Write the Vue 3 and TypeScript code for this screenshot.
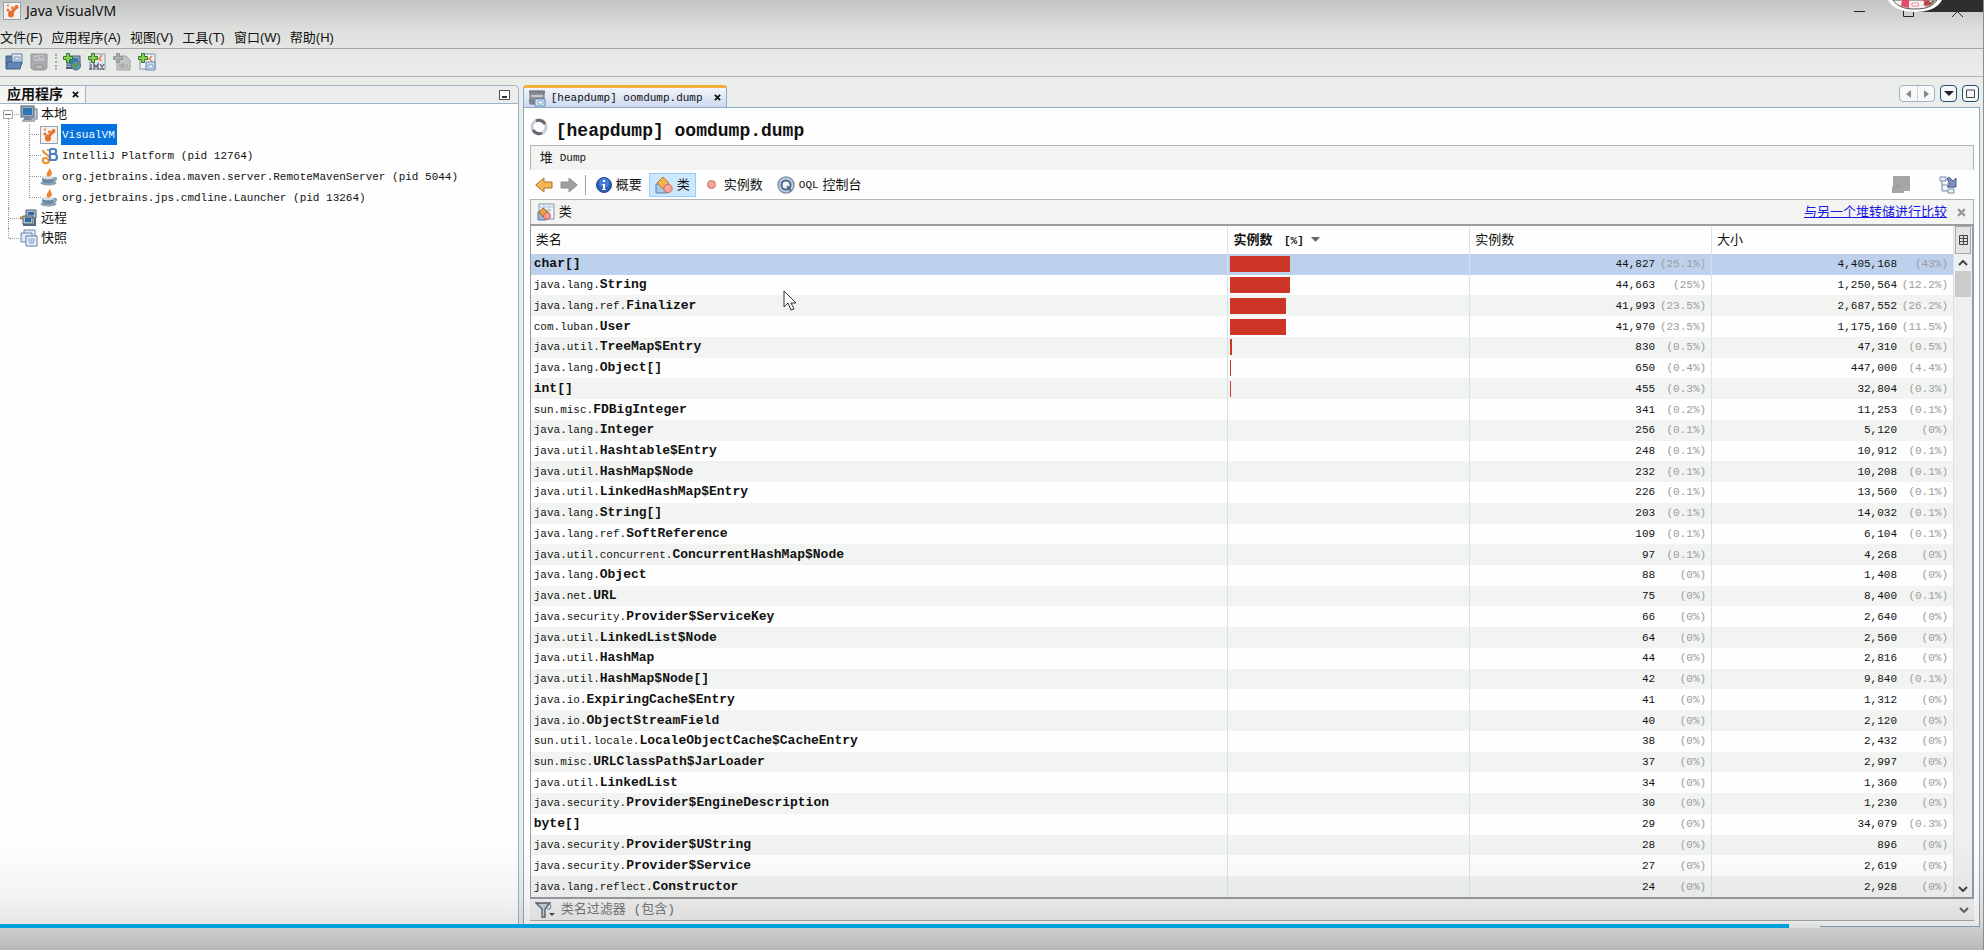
<script setup lang="ts">
import { ref } from 'vue'

interface ClassRow {
  pkg: string
  name: string
  count: string
  countPct: string
  size: string
  sizePct: string
}

const parse = (line: string): ClassRow => {
  const [pkg, name, count, countPct, size, sizePct] = line.split('|')
  return { pkg, name, count, countPct, size, sizePct }
}

const rows: ClassRow[] = [
  '|char[]|44,827|25.1|4,405,168|43',
  'java.lang.|String|44,663|25|1,250,564|12.2',
  'java.lang.ref.|Finalizer|41,993|23.5|2,687,552|26.2',
  'com.luban.|User|41,970|23.5|1,175,160|11.5',
  'java.util.|TreeMap$Entry|830|0.5|47,310|0.5',
  'java.lang.|Object[]|650|0.4|447,000|4.4',
  '|int[]|455|0.3|32,804|0.3',
  'sun.misc.|FDBigInteger|341|0.2|11,253|0.1',
  'java.lang.|Integer|256|0.1|5,120|0',
  'java.util.|Hashtable$Entry|248|0.1|10,912|0.1',
  'java.util.|HashMap$Node|232|0.1|10,208|0.1',
  'java.util.|LinkedHashMap$Entry|226|0.1|13,560|0.1',
  'java.lang.|String[]|203|0.1|14,032|0.1',
  'java.lang.ref.|SoftReference|109|0.1|6,104|0.1',
  'java.util.concurrent.|ConcurrentHashMap$Node|97|0.1|4,268|0',
  'java.lang.|Object|88|0|1,408|0',
  'java.net.|URL|75|0|8,400|0.1',
  'java.security.|Provider$ServiceKey|66|0|2,640|0',
  'java.util.|LinkedList$Node|64|0|2,560|0',
  'java.util.|HashMap|44|0|2,816|0',
  'java.util.|HashMap$Node[]|42|0|9,840|0.1',
  'java.io.|ExpiringCache$Entry|41|0|1,312|0',
  'java.io.|ObjectStreamField|40|0|2,120|0',
  'sun.util.locale.|LocaleObjectCache$CacheEntry|38|0|2,432|0',
  'sun.misc.|URLClassPath$JarLoader|37|0|2,997|0',
  'java.util.|LinkedList|34|0|1,360|0',
  'java.security.|Provider$EngineDescription|30|0|1,230|0',
  '|byte[]|29|0|34,079|0.3',
  'java.security.|Provider$UString|28|0|896|0',
  'java.security.|Provider$Service|27|0|2,619|0',
  'java.lang.reflect.|Constructor|24|0|2,928|0',
].map(parse)

const menus = ['文件(F)', '应用程序(A)', '视图(V)', '工具(T)', '窗口(W)', '帮助(H)']

const apps = [
  { icon: 'vvm', label: 'VisualVM' },
  { icon: 'jb', label: 'IntelliJ Platform (pid 12764)' },
  { icon: 'java', label: 'org.jetbrains.idea.maven.server.RemoteMavenServer (pid 5044)' },
  { icon: 'java', label: 'org.jetbrains.jps.cmdline.Launcher (pid 13264)' },
]

const selectedRow = ref(0)
const selectedApp = ref(0)
const filter = ref('')

const barWidth = (pct: string): string => {
  const value = parseFloat(pct)
  return value < 0.3 ? '0' : `max(1px, ${value}%)`
}
</script>

<template>
  <div class="app">
    <svg class="defs" aria-hidden="true">
      <symbol id="vvm" viewBox="0 0 18 18">
        <rect x=".5" y=".5" width="17" height="17" fill="#f4f1ee" stroke="#8fa3b8" />
        <ellipse cx="8" cy="12" rx="3" ry="3.600" fill="#e5702b" /><path d="M9 10 13 6" stroke="#e5702b" stroke-width="2.500" />
        <circle cx="13.500" cy="5" r="2" fill="#e5702b" /><circle cx="5" cy="3.500" r="1.300" fill="#ee9a55" /><circle cx="9.500" cy="6" r="1.400" fill="#e5702b" /><circle cx="5" cy="8" r="1.500" fill="#e5702b" />
      </symbol>
      <symbol id="jb" viewBox="0 0 18 18">
        <path d="M7 3h3v7c0 4-2 7-5 6-3-1-3-5 0-5s5 3 3 5M3 3c0 5 7 4 7 9" fill="none" stroke="#ef8f22" stroke-width="2" />
        <path d="M10 2v12M10 2h4c3 0 3 5-1 5h-2 3c4 0 4 6 0 6h-4" fill="none" stroke="#4d7fc6" stroke-width="2.200" />
      </symbol>
      <symbol id="java" viewBox="0 0 18 18">
        <ellipse cx="8.500" cy="15" rx="8" ry="2.500" fill="#8ba0b4" />
        <path d="M2 9h12v2c0 3-2 4-6 4S2 14 2 11z" fill="#6f879f" /><path d="M14 10c3-1 3 2 0 3" fill="none" stroke="#6f879f" stroke-width="1.500" />
        <ellipse cx="8" cy="9.500" rx="6" ry="1.800" fill="#d8e0e8" />
        <path d="M9 0c1 3-5 5-1 9 4-2 5-3 3-6 0 0 0-2-2-3z" fill="#ec8433" />
      </symbol>
      <symbol id="host" viewBox="0 0 18 18">
        <rect x="7" y="4" width="10" height="10" fill="#ccd3da" stroke="#68798a" />
        <rect x="1" y="1" width="13" height="11" fill="#9aabbb" stroke="#4e6274" /><rect x="3" y="3" width="9" height="7" fill="#2f74b5" />
        <path d="M5 12h5l2 3H3z" fill="#74889a" /><path d="M2 16h13" stroke="#4e6274" />
      </symbol>
      <symbol id="remote" viewBox="0 0 18 18">
        <path d="M6 1h10v8H6zM3 7h10v8H3z" fill="#b0bcc8" stroke="#4e6274" /><path d="M8 3h6v3H8zM5 9h6v4H5z" fill="#2d67a5" />
        <path d="M3 16h13M15 9v7" stroke="#56697b" stroke-width="2" /><path d="M0 9h3" stroke="#b98639" stroke-width="3" />
      </symbol>
      <symbol id="snaps" viewBox="0 0 18 18">
        <path d="M4 1h11v9H4z" fill="#dfe8f4" stroke="#6c87ad" /><path d="M1 4h11v9H1z" fill="#dfe8f4" stroke="#6c87ad" /><path d="M6 7h11v10H6z" fill="#edf3fa" stroke="#5c7aa6" />
        <path d="M8 10h7M8 12h7" stroke="#7c99c2" /><path d="M9 13h5v2H9z" fill="#a7bedc" />
      </symbol>
      <symbol id="open" viewBox="0 0 18 18">
        <path d="M1 3h6v12H1z" fill="#5a7ea5" stroke="#3f5f83" /><path d="M7 1h10v10H7z" fill="#e6eef7" stroke="#5f7d9d" /><path d="M9 4h6v3H9z" fill="none" stroke="#7391b4" />
        <path d="M3 9h14l-2 7H1z" fill="#5f88b5" stroke="#3f5f83" />
      </symbol>
      <symbol id="save" viewBox="0 0 18 18">
        <path d="M1 1h16v14l-2 2H3l-2-2z" fill="#a9abae" stroke="#97999c" /><path d="M4 2h10v6H4z" fill="#bfc1c3" /><path d="M10 4h3M5 5h3M5 12h8v4H5z" stroke="#8f9194" fill="#b9bbbd" />
      </symbol>
      <symbol id="plus" viewBox="0 0 10 10">
        <path d="M3.500.5h3v3h3v3h-3v3h-3v-3h-3v-3h3z" fill="#8bd053" stroke="#2f7d24" />
      </symbol>
      <symbol id="addhost" viewBox="0 0 18 18">
        <rect x="4" y="3" width="13" height="10" fill="#8fa4b8" stroke="#4e6274" /><rect x="6" y="5" width="9" height="6" fill="#3878b4" /><path d="M3 15h9" stroke="#4e6274" stroke-width="2" />
        <circle cx="13" cy="12.500" r="4.500" fill="#5c93c9" stroke="#42698f" /><path d="M10 11c2-2 4 0 6-1l-2 5-2 1z" fill="#55a048" />
        <use href="#plus" x="0" y="0" width="10" height="10" />
      </symbol>
      <symbol id="addjmx" viewBox="0 0 18 18">
        <path d="M5 1h12v15H2V8z" fill="#e4e9ee" stroke="#8c9cad" /><path d="m14 2-3 4 3 2" stroke="#ec8433" fill="none" stroke-width="1.500" />
        <path d="M3 11v5H1m5 1v-6l2 3 2-3v6m2-6 4 6m0-6-4 6" stroke="#5a6470" fill="none" stroke-width="1.300" /><use href="#plus" width="10" height="10" />
      </symbol>
      <symbol id="adddump" viewBox="0 0 18 18">
        <path d="M4 3h9l4 4v10H4z" fill="#c3c5c6" stroke="#a0a2a3" /><path d="M3.500.5h3v3h3v3h-3v3h-3v-3h-3v-3h3z" fill="#a9b0a9" stroke="#929892" />
        <path d="M7 11v4M9 11h2v4H9zM14 11v4" stroke="#999b9c" fill="none" />
      </symbol>
      <symbol id="addsnap" viewBox="0 0 18 18">
        <path d="M4 1h13v15H2V8z" fill="#f0f3f7" stroke="#7890ae" /><path d="m14 3-3 3 3 2" stroke="#ec8433" fill="none" stroke-width="1.500" />
        <path d="M8 9h9v8H8z" fill="#cfdff1" stroke="#5f82b0" /><path d="M10 12h5v3h-5z" fill="#fff" stroke="#7d9ac0" /><use href="#plus" width="10" height="10" />
      </symbol>
      <symbol id="heap" viewBox="0 0 18 18">
        <path d="M2 2h14v13H2z" fill="#8c9096" stroke="#6c7076" /><path d="M1 3h16M1 12h6" stroke="#777b80" stroke-width="3" stroke-dasharray="2 1" /><path d="M3 7h12" stroke="#c5c8cc" stroke-width="2" />
        <path d="M7 10h10v7H7z" fill="#d6e6f6" stroke="#5f88b5" /><path d="M10 12h5v3h-5z" fill="#fff" stroke="#7faad5" />
      </symbol>
      <symbol id="shapes" viewBox="0 0 18 18">
        <path d="M1 8h11v9H1z" fill="#a9c8e6" stroke="#5580aa" /><path d="m8 1 6 6-6 6-6-6z" fill="#f2b450" stroke="#b0792b" /><circle cx="13" cy="12.500" r="4.200" fill="#f4a59b" stroke="#c8645a" />
      </symbol>
      <symbol id="shapetable" viewBox="0 0 18 18">
        <path d="M2 1h15v15H2z" fill="#f5f8fb" stroke="#8194aa" /><path d="M3 4h14M5 7h10M7 1v6M12 1v13" stroke="#a9bfd6" />
        <path d="M1 9h8v8H1z" fill="#94b7da" stroke="#5580aa" /><path d="m6 5 5 4-5 5-4-5z" fill="#e9a542" stroke="#946729" /><circle cx="10" cy="13" r="3.500" fill="#f4a08f" stroke="#c8645a" />
      </symbol>
      <symbol id="info" viewBox="0 0 16 16">
        <circle cx="8" cy="8" r="7.500" fill="#2b5fb8" stroke="#1d468f" /><circle cx="8" cy="6" r="5" fill="#4a7ed0" /><path d="M7 3h2v2H7zM6 7h3v5h1v1H6v-1h1V8H6z" fill="#fff" />
      </symbol>
      <symbol id="oql" viewBox="0 0 18 18">
        <circle cx="9" cy="9" r="8" fill="#c3cfdd" stroke="#7f93ab" stroke-width="1.500" /><circle cx="9" cy="9" r="4.500" fill="#f1f5f9" stroke="#4c6788" stroke-width="2" /><path d="m10 10 4 5" stroke="#4c6788" stroke-width="2" />
      </symbol>
      <symbol id="left" viewBox="0 0 18 16">
        <path d="M.7 8 9 1v4h8v6H9v4z" fill="#f5b655" stroke="#a9722a" />
      </symbol>
      <symbol id="right" viewBox="0 0 18 16">
        <path d="M17.300 8 9 1v4H1v6h8v4z" fill="#9d9fa1" stroke="#8d8f91" />
      </symbol>
      <symbol id="funnel" viewBox="0 0 20 16">
        <path d="M1 1h14l-5 6v8H7V7z" fill="#c5d3de" stroke="#55626e" stroke-width="1.300" /><path d="M12 3c3-2 5 0 3 4h-3" fill="none" stroke="#6c7984" /><path d="M14 11h6l-3 3z" fill="#454d55" />
      </symbol>
      <symbol id="jump" viewBox="0 0 18 18">
        <path d="M1 1h6v4H1zM9 7h6v4H9zM9 13h6v4H9zM3 5v10h6M3 9h6" fill="#eef2f8" stroke="#758aa5" /><path d="m8 3 2-2 4 4 3-3v9H8l3-3z" fill="#7f8ec0" stroke="#4d5b91" />
      </symbol>
      <symbol id="chev" viewBox="0 0 10 6"><path d="m1 1 4 4 4-4" fill="none" stroke="currentColor" stroke-width="2" /></symbol>
      <symbol id="cross" viewBox="0 0 8 8"><path d="m1 1 6 6m0-6-6 6" stroke="currentColor" stroke-width="2" /></symbol>
    </svg>

    <header class="chrome">
      <div class="titlebar">
        <svg class="i18"><use href="#vvm" /></svg>
        <span class="apptitle">Java VisualVM</span>
        <div class="winbtns">
          <button aria-label="最小化"><svg width="11" height="11"><path d="M0 5.500h11" stroke="#222" /></svg></button>
          <button aria-label="最大化"><svg width="11" height="11"><path d="M.5.5h10v10H.5z" stroke="#222" fill="none" /></svg></button>
          <button aria-label="关闭"><svg width="11" height="11"><path d="m0 0 11 11M11 0 0 11" stroke="#222" /></svg></button>
        </div>
      </div>
      <nav class="menubar">
        <button v-for="m in menus" :key="m">{{ m }}</button>
      </nav>
      <div class="toolbar">
        <button aria-label="打开"><svg class="i18"><use href="#open" /></svg></button>
        <button aria-label="保存" disabled><svg class="i18"><use href="#save" /></svg></button>
        <span class="grip"></span>
        <button aria-label="添加远程主机"><svg class="i18"><use href="#addhost" /></svg></button>
        <button aria-label="添加 JMX 连接"><svg class="i18"><use href="#addjmx" /></svg></button>
        <button aria-label="添加核心 Dump" disabled><svg class="i18"><use href="#adddump" /></svg></button>
        <button aria-label="添加快照"><svg class="i18"><use href="#addsnap" /></svg></button>
      </div>
    </header>

    <main class="work">
      <aside class="side">
        <div class="sidetabs">
          <div class="sidetab"><span>应用程序</span><button aria-label="关闭"><svg class="x"><use href="#cross" /></svg></button></div>
          <button class="mini" aria-label="最小化窗口"><svg width="11" height="10"><path d="M.5.5h10v9H.5z" fill="#fff" stroke="#444b55" /><path d="M3 7h5" stroke="#333" stroke-width="2" /></svg></button>
        </div>
        <ul class="tree">
          <li class="root first">
            <div class="node"><i class="toggle"></i><svg class="i18"><use href="#host" /></svg><span>本地</span></div>
            <ul>
              <li v-for="(a, i) in apps" :key="a.label" class="child">
                <svg class="i18"><use :href="'#' + a.icon" /></svg>
                <button :class="{ sel: i === selectedApp }" @click="selectedApp = i">{{ a.label }}</button>
              </li>
            </ul>
          </li>
          <li class="root"><div class="node"><svg class="i18"><use href="#remote" /></svg><span>远程</span></div></li>
          <li class="root last"><div class="node"><svg class="i18"><use href="#snaps" /></svg><span>快照</span></div></li>
        </ul>
      </aside>

      <section class="main">
        <div class="doctabs">
          <div class="doctab">
            <svg class="i18"><use href="#heap" /></svg><span>[heapdump] oomdump.dump</span>
            <button aria-label="关闭标签"><svg class="x"><use href="#cross" /></svg></button>
          </div>
          <div class="tabnav">
            <div class="pair">
              <button aria-label="上一个"><svg width="5" height="8"><path d="M5 0v8L0 4z" fill="#8a8a8a" /></svg></button>
              <button aria-label="下一个"><svg width="5" height="8"><path d="M0 0v8l5-4z" fill="#8a8a8a" /></svg></button>
            </div>
            <button class="nb" aria-label="文档列表"><svg width="10" height="5"><path d="M0 0h10L5 5z" fill="#222" /></svg></button>
            <button class="nb" aria-label="最大化窗口"><svg width="9" height="9"><path d="M.5 1h8v7.500h-8z" fill="none" stroke="#444" /></svg></button>
          </div>
        </div>
        <div class="doc">
          <div class="heading">
            <svg class="spin" viewBox="0 0 18 18"><circle cx="9" cy="9" r="7" fill="none" stroke="#c9ccd1" stroke-width="3" /><path d="M3 12a7 7 0 0 0 9 3M15 6A7 7 0 0 0 6 3" fill="none" stroke="#646870" stroke-width="3" /></svg>
            <h1>[heapdump] oomdump.dump</h1>
          </div>
          <div class="strip"><span>堆</span><span class="m">Dump</span></div>
          <div class="tools">
            <button aria-label="后退"><svg class="arrow"><use href="#left" /></svg></button>
            <button aria-label="前进"><svg class="arrow"><use href="#right" /></svg></button>
            <i class="vr"></i>
            <button class="t"><svg class="i16"><use href="#info" /></svg>概要</button>
            <button class="t on"><svg class="i18"><use href="#shapes" /></svg>类</button>
            <button class="t dot"><svg width="9" height="9"><circle cx="4.500" cy="4.500" r="4" fill="#f6a79b" stroke="#c96f66" /></svg>实例数</button>
            <button class="t"><svg class="i18"><use href="#oql" /></svg><span class="m">OQL</span>控制台</button>
            <div class="far">
              <button aria-label="导出" disabled><svg width="18" height="17"><path d="M1 0h17v15H12v2H0v-6l1-1z" fill="#a3a5a7" /><path d="M3 12c2-3 4-3 6 0" fill="none" stroke="#8b8d8f" /></svg></button>
              <button aria-label="跳转"><svg class="i18"><use href="#jump" /></svg></button>
            </div>
          </div>
          <div class="strip sub">
            <svg class="i18"><use href="#shapetable" /></svg><span>类</span>
            <a href="#compare">与另一个堆转储进行比较</a>
            <button aria-label="关闭视图"><svg class="x9"><use href="#cross" /></svg></button>
          </div>

          <div class="grid">
            <div class="gridbody">
              <table>
                <colgroup><col class="c1" /><col class="c2" /><col class="c2" /><col class="c2" /></colgroup>
                <thead>
                  <tr>
                    <th>类名</th>
                    <th class="sorted">实例数 <span class="m">[%]</span><svg width="9" height="5"><path d="M0 0h9L4.500 5z" fill="#666" /></svg></th>
                    <th>实例数</th>
                    <th>大小</th>
                  </tr>
                </thead>
                <tbody>
                  <tr v-for="(r, i) in rows" :key="r.pkg + r.name" :class="{ sel: i === selectedRow }" @click="selectedRow = i">
                    <td class="cls">{{ r.pkg }}<b>{{ r.name }}</b></td>
                    <td class="barcell"><div class="bar" :style="{ width: barWidth(r.countPct) }"></div></td>
                    <td class="num">{{ r.count }}<span>({{ r.countPct }}%)</span></td>
                    <td class="num">{{ r.size }}<span>({{ r.sizePct }}%)</span></td>
                  </tr>
                </tbody>
              </table>
            </div>
            <div class="scroller">
              <button class="cols" aria-label="选择列"><svg width="9" height="10"><path d="M.5.5h8v9h-8zM0 3.500h9M0 6.500h9M4.500 0v10" fill="none" stroke="#444" /></svg></button>
              <button aria-label="向上滚动"><svg class="chev up"><use href="#chev" /></svg></button>
              <div class="thumb"></div>
              <button class="down" aria-label="向下滚动"><svg class="chev"><use href="#chev" /></svg></button>
            </div>
          </div>

          <div class="filter">
            <svg class="funnel"><use href="#funnel" /></svg>
            <input v-model="filter" type="text" aria-label="类名过滤器" placeholder="类名过滤器 (包含)" />
            <button aria-label="展开"><svg class="chev"><use href="#chev" /></svg></button>
          </div>
        </div>
      </section>
    </main>

    <footer class="player"></footer>
    <div class="shade"></div>
    <div class="progress"><i class="played"></i><i class="buffered"></i></div>
    <div class="ribbon"></div>
    <svg class="avatar" viewBox="0 0 54 12">
      <path d="M0 0h54c-4 8-14 12-27 12S4 8 0 0z" fill="#fff" />
      <path d="M5 0c4 6 10 9 22 9S45 6 49 0z" fill="#f7f0ee" stroke="#555" /><path d="M14 0h7v8l-8-2zM35 0h5l4 4-6 3z" fill="#e54868" />
      <path d="M24 3h6l1 3h-7z" fill="#fff" stroke="#e88a9a" /><path d="m36 5 5-4M41 5l5-4" stroke="#7b5a3c" stroke-width="2" />
    </svg>
    <svg class="cursor" viewBox="0 0 14 21"><path d="M1 1v16l4-4 3 7 3-1-3-6h5z" fill="#fff" stroke="#333" /></svg>
  </div>
</template>

<style>
body {
  margin: 0;
}
</style>

<style scoped>
.app {
  position: relative;
  display: flex;
  flex-direction: column;
  height: 100vh;
  overflow: hidden;
  box-sizing: border-box;
  border-right: 1px solid #8b8e8d;
  background: #ebedea;
  color: #111;
  font: 13px/18px "Liberation Sans", "Noto Sans CJK SC", sans-serif;
}
.app * {
  box-sizing: border-box;
}
.defs {
  position: absolute;
  width: 0;
  height: 0;
}
svg {
  display: block;
  flex: none;
}
button {
  display: flex;
  align-items: center;
  padding: 0;
  border: 0;
  background: none;
  color: inherit;
  font: inherit;
  white-space: nowrap;
}
.i18 { width: 18px; height: 18px; }
.i16 { width: 16px; height: 16px; }
.x { width: 7px; height: 7px; }
.x9 { width: 9px; height: 9px; color: #999; }
.m, .doctab span, .child button, .heading h1, table {
  font-family: "Liberation Mono", "Noto Sans CJK SC", monospace;
}
.m { font-size: 11px; }

.chrome {
  background: linear-gradient(#c2c4c2, #dee0de 30px, #e8eae8 60px, #ebedea);
}
.titlebar {
  display: flex;
  align-items: center;
  height: 22px;
  padding-left: 3px;
  gap: 5px;
}
.apptitle { font: 14px/20px "Noto Sans", sans-serif; }
.winbtns {
  display: flex;
  gap: 38px;
  margin-left: auto;
  padding: 0 20px 0 0;
}
.menubar {
  display: flex;
  gap: 9px;
  height: 26px;
  padding-top: 6px;
}
.toolbar {
  display: flex;
  align-items: center;
  gap: 7px;
  height: 29px;
  padding: 0 5px 2px;
  border-top: 1px solid #a3a6a4;
  border-bottom: 1px solid #b0b3b1;
}
.grip { width: 2px; height: 16px; border-left: 2px dotted #aaa; margin: 0 -1px 0 0; }

.work {
  display: flex;
  flex: 1;
  min-height: 0;
  gap: 4px;
  padding: 8px 3px 0 0;
}
.side {
  display: flex;
  flex-direction: column;
  width: 26.200%;
  border: solid #9db4c8;
  border-width: 1px 1px 0 0;
  border-radius: 0 5px 0 0;
  background: #fdfefd;
}
.sidetabs {
  display: flex;
  height: 18px;
  justify-content: space-between;
  align-items: center;
  padding-right: 8px;
  border-bottom: 1px solid #9db4c8;
  border-radius: 0 5px 0 0;
  background: #ecedec;
}
.sidetab {
  display: flex;
  align-items: flex-start;
  height: 17px;
  padding: 0 6px 0 7px;
  gap: 9px;
  border-right: 1px solid #9db4c8;
  background: #f5f5f3;
  font-weight: 700;
  font-size: 14px;
  line-height: 17px;
}
.sidetab button { height: 17px; }

ul { margin: 0; padding: 0; list-style: none; }
.root { position: relative; }
.root::after {
  content: "";
  position: absolute;
  left: 8px;
  top: 0;
  bottom: 0;
  border-left: 1px dotted #999;
}
.root.first::after { top: 15px; }
.root.last::after { bottom: 10px; }
.node {
  position: relative;
  display: flex;
  align-items: center;
  height: 20px;
  padding-left: 20px;
  gap: 3px;
}
.node::before {
  content: "";
  position: absolute;
  left: 9px;
  top: 10px;
  width: 10px;
  border-top: 1px dotted #999;
}
.toggle {
  position: absolute;
  z-index: 1;
  left: 3px;
  top: 6px;
  width: 10px;
  height: 9px;
  border: 1px solid #a5a8ab;
  background: linear-gradient(#5a6570, #5a6570) center / 6px 1px no-repeat #fff;
}
.child {
  position: relative;
  display: flex;
  align-items: center;
  height: 21px;
  padding-left: 40px;
  gap: 3px;
}
.child::before {
  content: "";
  position: absolute;
  left: 29px;
  top: 0;
  width: 11px;
  height: 21px;
  border-left: 1px dotted #999;
  background: repeating-linear-gradient(90deg, #999 0 1px, transparent 1px 2px) 0 10px / 11px 1px no-repeat;
}
.child:last-child::before { height: 11px; }
.child button { height: 21px; padding: 0 2px 0 1px; font-size: 11px; }
.child .sel { background: #0272de; color: #fff; }

.main {
  display: flex;
  flex-direction: column;
  flex: 1;
  min-width: 0;
}
.doctabs { display: flex; justify-content: space-between; height: 22px; }
.doctab {
  display: flex;
  align-items: center;
  gap: 5px;
  padding: 0 5px 0 4px;
  border: 1px solid #8ba8c4;
  border-top: 3px solid #f3ae3c;
  border-bottom: 0;
  border-radius: 3px 3px 0 0;
  background: linear-gradient(#f1f5fb, #ccd9ef);
}
.doctab span { font-size: 11px; }
.doctab button { margin-left: 6px; }
.tabnav { display: flex; gap: 5px; height: 17px; padding-right: 1px; }
.pair { display: flex; border: 1px solid #9db4c8; border-radius: 4px; background: #f7f8f8; }
.pair button { width: 17px; justify-content: center; }
.pair button + button { border-left: 1px solid #c9d3dc; }
.nb { width: 17px; justify-content: center; border: 1px solid #1f4f7c; border-radius: 4px; background: #f7f8f8; }
.doc {
  display: flex;
  flex-direction: column;
  flex: 1;
  min-height: 0;
  padding: 0 5px 0 6px;
  border: 1px solid #8ba8c4;
  background: #fdfefd;
}
.heading { display: flex; align-items: center; gap: 8px; height: 37px; padding-top: 8px; }
.spin { width: 18px; height: 18px; margin-bottom: 7px; }
h1 { margin: 0; font-size: 18px; line-height: 24px; }
.strip {
  display: flex;
  align-items: center;
  gap: 7px;
  height: 25px;
  padding: 0 9px;
  border: 1px solid #b3b5b4;
  border-bottom: 0;
  background: #f3f4f2;
}
.tools {
  display: flex;
  align-items: center;
  height: 29px;
  padding: 0 17px 0 5px;
}
.arrow { width: 18px; height: 16px; margin-right: 7px; }
.vr { width: 1px; height: 20px; margin-right: 4px; background: #a0a0a0; }
.t { height: 24px; padding: 0 5px; gap: 4px; border: 1px solid transparent; margin-right: 1px; }
.t.on { border-color: #99cdf5; background: #cce8ff; }
.dot { gap: 8px; padding: 0 6px 0 9px; }
.far { display: flex; gap: 29px; margin-left: auto; }
.sub { padding: 0 7px 0 6px; gap: 4px; }
.sub a { margin-left: auto; margin-right: 6px; color: #1616e6; text-decoration: underline; }

.grid {
  display: flex;
  flex: 1;
  min-height: 0;
  border: 2px solid #999ba0;
  border-width: 2px 2px 2px 1px;
}
.gridbody { flex: 1; min-width: 0; overflow: hidden; }
table { width: 100%; height: 100%; table-layout: fixed; border-collapse: collapse; font-size: 11px; line-height: 16px; }
.c1 { width: 49%; }
.c2 { width: 17%; }
th {
  height: 28px;
  padding: 0 5px;
  border-right: 1px solid #dde0e4;
  text-align: left;
  font-weight: 400;
  font-family: "Liberation Sans", "Noto Sans CJK SC", sans-serif;
  font-size: 13px;
}
.sorted { font-weight: 700; }
.sorted .m { margin: 0 7px 0 8px; }
.sorted svg { display: inline-block; vertical-align: 2px; }
td { padding: 0 5px; border-right: 1px solid #d5e1f1; white-space: nowrap; overflow: hidden; }
tbody tr:nth-child(odd) { background: #f2f4f2; }
tbody tr.sel { background: #bdd1ed; }
.cls { padding: 0 3px; }
.cls b { font-size: 13px; }
.num { text-align: right; }
.num span { display: inline-block; width: 51px; color: #9a9c9e; }
.barcell { padding: 0 2px; }
.bar { height: 16px; background: #cd3526; }

.scroller { display: flex; flex-direction: column; width: 18px; padding: 0 1px; background: #efefef; }
.scroller button { justify-content: center; height: 17px; color: #444; }
.scroller .cols { height: 28px; border: 1px solid #a6a8aa; background: #e2e3e3; }
.thumb { height: 26px; background: #cbccca; }
.scroller .down { margin-top: auto; }
.chev { width: 10px; height: 6px; }
.up { transform: rotate(180deg); }
.filter {
  display: flex;
  align-items: center;
  height: 22px;
  margin-bottom: 5px;
  padding: 0 5px;
  gap: 6px;
  border-bottom: 1px solid #acaeae;
  background: #f1f2f1;
  color: #666;
}
.funnel { width: 20px; height: 16px; }
.filter input {
  flex: 1;
  min-width: 0;
  padding: 0;
  border: 0;
  outline: 0;
  background: none;
  font: 13px/18px "Liberation Mono", "Noto Sans CJK SC", monospace;
}
.filter input::placeholder { color: #777; opacity: 1; }

.player { height: 23px; background: #e3e5e2; }
.shade {
  position: absolute;
  inset: auto -1px 0 0;
  height: 110px;
  background: linear-gradient(transparent, rgba(0, 0, 0, 0.040) 50%, rgba(0, 0, 0, 0.100) 82%, rgba(0, 0, 0, 0.200));
  pointer-events: none;
}
.progress {
  position: absolute;
  inset: auto 0 22px 0;
  display: flex;
  height: 4px;
}
.played { width: 90.200%; background: #00a0dc; }
.buffered { width: 1.600%; background: #dfe2e2; }
.ribbon {
  position: absolute;
  top: 0;
  right: -1px;
  width: 74px;
  height: 12px;
  background: #2c2e2f;
}
.avatar { position: absolute; top: 0; right: 41px; width: 54px; height: 12px; }
.cursor { position: absolute; left: 39.500%; top: 290px; width: 14px; height: 21px; }
</style>
